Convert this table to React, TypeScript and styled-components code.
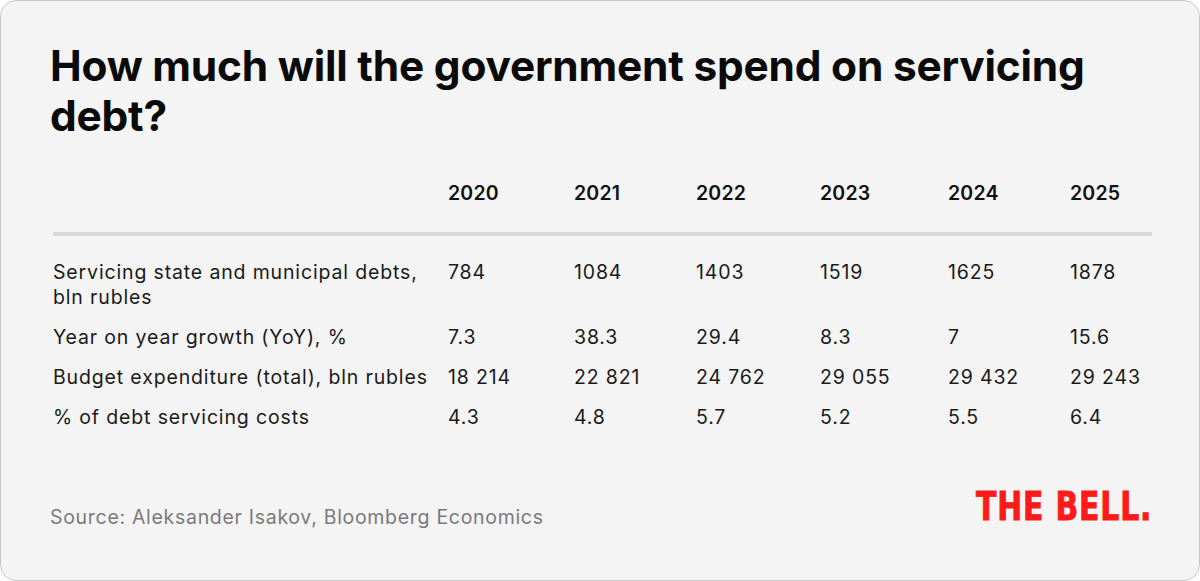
import React from "react";
import styled, { createGlobalStyle } from "styled-components";

const GlobalStyle = createGlobalStyle`
  html, body {
    margin: 0;
    padding: 0;
    background: #ffffff;
  }
`;

const Card = styled.div`
  box-sizing: border-box;
  width: 1200px;
  height: 581px;
  background: #f4f4f4;
  border: 1px solid #c9c9c9;
  border-radius: 16px;
  padding: 40px 47px 0 49px;
  display: flex;
  flex-direction: column;
  font-family: Inter, "Liberation Sans", sans-serif;
  color: #111;
`;

const Title = styled.h1`
  margin: 0;
  font-size: 42.4px;
  line-height: 50px;
  font-weight: 700;
  color: #0a0a0a;
  letter-spacing: -0.2px;
`;

const Table = styled.div`
  margin-top: 40px;
  margin-left: 3px;
  display: grid;
  grid-template-columns: 395px 126px 122px 124px 128px 122px 1fr;
  font-size: 19.5px;
  line-height: 25px;
  letter-spacing: 0.85px;
`;

const HeadCell = styled.div`
  font-weight: 600;
  letter-spacing: 0.2px;
  padding-bottom: 26px;
  border-bottom: 4px solid #d9d9d9;
`;

const Cell = styled.div<{ $first?: boolean }>`
  padding-top: ${(p) => (p.$first ? "24px" : "15px")};
  color: #1a1a1a;
  white-space: nowrap;
`;

const Footer = styled.div`
  margin-top: auto;
  display: flex;
  justify-content: space-between;
  align-items: flex-end;
  padding-bottom: 57px;
`;

const Source = styled.div`
  font-size: 19.5px;
  letter-spacing: 0.7px;
  color: #7a7a7a;
  margin-bottom: -6px;
`;

const Logo = styled.div`
  font-family: "DejaVu Sans Condensed", "DejaVu Sans", sans-serif;
  font-weight: 700;
  font-size: 39px;
  line-height: 30px;
  color: #ff1a1a;
  letter-spacing: 1px;
  -webkit-text-stroke: 0.9px #ff1a1a;
  transform: scaleX(0.85);
  transform-origin: right center;
  margin-bottom: 1px;
`;

const years = ["2020", "2021", "2022", "2023", "2024", "2025"];

const rows: { label: React.ReactNode; values: string[] }[] = [
  {
    label: (
      <>
        Servicing state and municipal debts,
        <br />
        bln rubles
      </>
    ),
    values: ["784", "1084", "1403", "1519", "1625", "1878"],
  },
  {
    label: "Year on year growth (YoY), %",
    values: ["7.3", "38.3", "29.4", "8.3", "7", "15.6"],
  },
  {
    label: "Budget expenditure (total), bln rubles",
    values: ["18 214", "22 821", "24 762", "29 055", "29 432", "29 243"],
  },
  {
    label: "% of debt servicing costs",
    values: ["4.3", "4.8", "5.7", "5.2", "5.5", "6.4"],
  },
];

export default function App() {
  return (
    <>
      <GlobalStyle />
      <Card>
        <Title>How much will the government spend on servicing debt?</Title>
        <Table>
          <HeadCell />
          {years.map((y) => (
            <HeadCell key={y}>{y}</HeadCell>
          ))}
          {rows.map((row, i) => (
            <React.Fragment key={i}>
              <Cell $first={i === 0}>{row.label}</Cell>
              {row.values.map((v, j) => (
                <Cell key={j} $first={i === 0}>
                  {v}
                </Cell>
              ))}
            </React.Fragment>
          ))}
        </Table>
        <Footer>
          <Source>Source: Aleksander Isakov, Bloomberg Economics</Source>
          <Logo>THE BELL.</Logo>
        </Footer>
      </Card>
    </>
  );
}
